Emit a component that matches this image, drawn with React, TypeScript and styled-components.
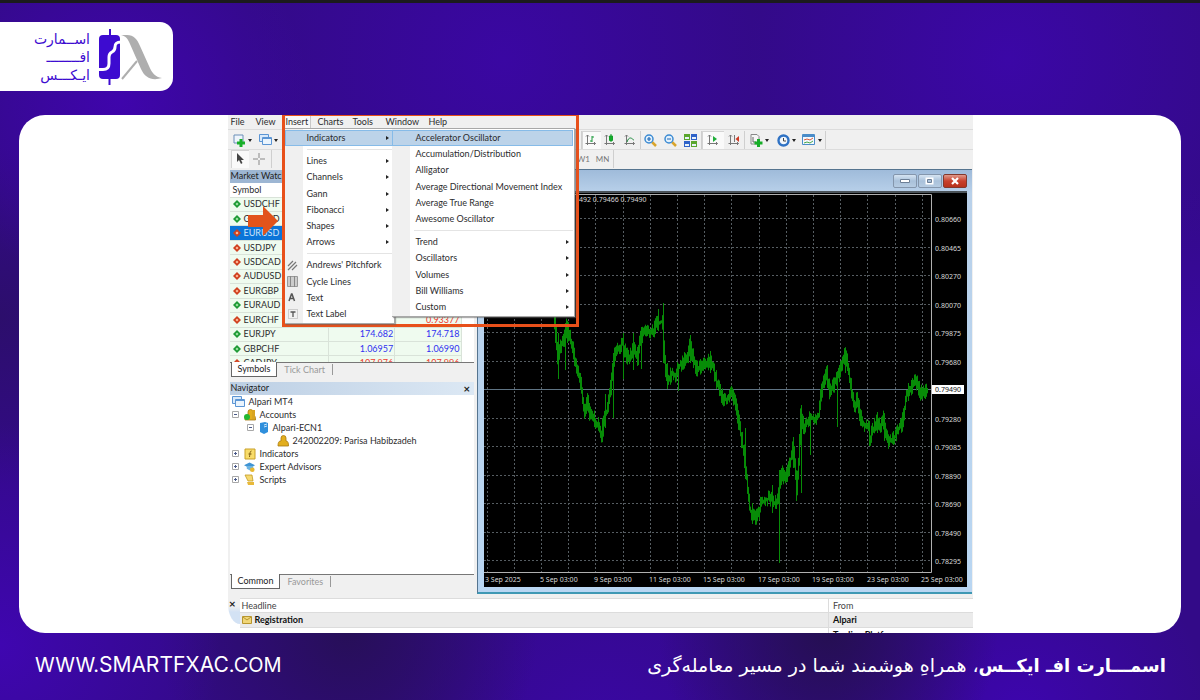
import React from "react";
import styled, { createGlobalStyle } from "styled-components";

const GlobalStyle = createGlobalStyle`
  *, *::before, *::after { box-sizing: border-box; }
  body { margin: 0; background: #310a86; }
  button { font: inherit; color: inherit; background: none; border: 0; margin: 0; padding: 0; text-align: left; white-space: nowrap; }
  a { color: inherit; text-decoration: none; }
  svg { display: block; flex: none; }
`;

const orange = "#e8501a";

/* ---------- page shell ---------- */

const Page = styled.div`
  display: flex;
  flex-direction: column;
  min-height: 100vh;
  border-top: 3px solid #1b1b1d;
  color: #fff;
  background:
    radial-gradient(circle at 0% 92%, #3f06b0 0, transparent 220px),
    radial-gradient(circle at 10% 14%, #3f05ac 0, transparent 190px),
    radial-gradient(circle at 29% 90%, #270f58 0, transparent 190px),
    radial-gradient(circle at 69% 90%, #250f52 0, transparent 170px),
    radial-gradient(circle at 85% 102%, #3d05ae 0, transparent 190px),
    radial-gradient(circle at 50% 106%, #3a07a4 0, transparent 220px),
    radial-gradient(circle at 84% 8%, #3b07a6 0, transparent 260px),
    radial-gradient(circle at 42% 8%, #3a07a2 0, transparent 260px),
    radial-gradient(circle at 0% 45%, #2c0e6c 0, transparent 170px),
    radial-gradient(circle at 100% 50%, #3908a0 0, transparent 170px),
    #330a88;
`;

const Header = styled.header`
  padding: 19px 0 24px;
`;

const LogoTab = styled.a`
  display: inline-flex;
  align-items: center;
  justify-content: flex-end;
  gap: 9px;
  width: 173px;
  height: 69px;
  padding-right: 10px;
  vertical-align: top;
  color: #3d0bd0;
  background: #fff;
  border-radius: 0 13px 13px 0;
`;

const LogoWords = styled.span`
  display: flex;
  flex-direction: column;
  font: 14px/18px "DejaVu Sans", sans-serif;
  text-align: right;
`;

const Card = styled.main`
  display: flex;
  flex: 1;
  justify-content: center;
  margin: 0 19px;
  overflow: hidden;
  background: #fff;
  border-radius: 26px;
`;

const Footer = styled.footer`
  display: flex;
  align-items: center;
  justify-content: space-between;
  gap: 24px;
  height: 68px;
  padding: 0 34px 4px 35px;
`;

const Site = styled.a`
  font: 400 21px/28px Inter, sans-serif;
  small { font-size: 20px; }
`;

const Slogan = styled.p`
  margin: 0;
  font: 19px/30px "DejaVu Sans", sans-serif;
  b { font-size: 18px; }
`;

/* ---------- terminal window ---------- */

const Terminal = styled.section`
  position: relative;
  display: flex;
  flex-direction: column;
  width: 100%;
  max-width: 745px;
  font: 9px/12px Lato, sans-serif;
  color: #2c2c2e;
  background: #f0f0f0;
`;

const MenuBar = styled.nav`
  display: flex;
  height: 14px;
  padding-left: 3px;
`;

const MenuTitle = styled.button<{ $w: number; $open?: boolean }>`
  width: ${(p) => p.$w}px;
  line-height: 14px;
  ${(p) => p.$open && "width: 25px; margin-right: 7px; background: #f8f8f8; border-right: 1px solid #c8c8c8;"}
`;

const Toolbar = styled.div<{ $h: number }>`
  display: flex;
  align-items: flex-end;
  height: ${(p) => p.$h}px;
  border-top: 1px solid #dcdcdc;
`;

const ToolSet = styled.div<{ $w: number }>`
  display: flex;
  align-items: center;
  width: ${(p) => p.$w}px;
  padding-left: 3px;
  border-right: 1px solid #cfcfcf;
`;

const ToolGap = styled.div<{ $w: number }>`
  width: ${(p) => p.$w}px;
`;

const Tool = styled.button<{ $w?: number; $on?: boolean; $end?: boolean }>`
  display: flex;
  align-items: center;
  justify-content: center;
  gap: 2px;
  width: ${(p) => p.$w ?? 19}px;
  height: 18px;
  font-size: 8px;
  color: #777;
  ${(p) => p.$on && "background: #fafafa; box-shadow: inset 1px 1px #d4d4d4;"}
  ${(p) => p.$end && "border-right: 1px solid #cfcfcf;"}
`;

const Caret = styled.i`
  border: 2px solid transparent;
  border-top: 3px solid #222;
  border-bottom: 0;
`;

const Workspace = styled.div`
  display: flex;
  flex: 1;
`;

const Side = styled.aside`
  display: flex;
  flex: none;
  flex-direction: column;
  width: 249px;
  padding: 2px 3px 0 2px;
`;

const PanelTitle = styled.h2<{ $light?: boolean }>`
  display: flex;
  justify-content: space-between;
  height: 13px;
  margin: 0;
  padding: 0 3px 0 1px;
  font: inherit;
  color: #222;
  background: ${(p) => (p.$light ? "linear-gradient(90deg, #bccfe4, #dce8f4)" : "#9db6d3")};
`;

const QuoteBox = styled.div`
  height: 179px;
  overflow: hidden;
  background: #fff;
`;

const Quotes = styled.table`
  width: 232px;
  height: 188px;
  border-collapse: collapse;
  table-layout: fixed;
  line-height: 10px;
  th, td { padding: 0 1px; border: 0 solid #d9e3d9; border-width: 0 1px 1px 0; font-weight: 400; text-align: right; }
  th { height: 14px; padding-left: 3px; }
  th:first-child, td:first-child { width: 99px; text-align: left; }
  tbody tr { background: #effbef; }
`;

const QuoteRow = styled.tr<{ $picked?: boolean; $color: string }>`
  && { ${(p) => p.$picked && "background: #0b74d8; color: #cfe4fa;"} }
  td:not(:first-child) { color: ${(p) => p.$color}; }
`;

const SymbolName = styled.span`
  display: flex;
  align-items: center;
  gap: 3px;
  padding-left: 2px;
`;

const Tabs = styled.div`
  display: flex;
  height: 20px;
  border-top: 1px solid #777;
`;

const Tab = styled.button<{ $on?: boolean }>`
  height: 15px;
  padding: 0 7px;
  color: #999;
  border-right: 1px solid #999;
  ${(p) =>
    p.$on
      ? "margin: -1px 0 0 1px; padding: 0 6px; color: #222; background: #fff; border: 1px solid #666; border-top: 0;"
      : "height: 11px; margin-top: 1px; line-height: 11px;"}
`;

const Close = styled.button`
  font: 700 9px/12px "DejaVu Sans", sans-serif;
  color: #222;
`;

const Tree = styled.ul`
  flex: 1;
  margin: 0;
  padding: 0 0 0 2px;
  list-style: none;
  background: #fff;
`;

const Leaf = styled.li<{ $depth: number }>`
  display: flex;
  align-items: center;
  gap: 4px;
  height: 13px;
  padding-left: ${(p) => p.$depth * 15}px;
`;

/* ---------- chart window ---------- */

const ChartWindow = styled.section`
  display: flex;
  flex: 1;
  flex-direction: column;
  min-width: 0;
  margin: 1px 1px 0 0;
  padding: 0 5px 5px 6px;
  background: linear-gradient(#9fbbda, #b9d1ea 23px, #b9d6f2);
  border: 1px solid #55748f;
  border-bottom: 2px solid #3f98b4;
  border-width: 1px 0 2px 1px;
`;

const ChartTitle = styled.div`
  display: flex;
  align-items: center;
  justify-content: flex-end;
  gap: 1px;
  height: 23px;
  border-bottom: 2px solid #4a5258;
`;

const Caption = styled.button<{ $close?: boolean }>`
  display: flex;
  align-items: center;
  justify-content: center;
  width: 24px;
  height: 14px;
  background: ${(p) => (p.$close ? "linear-gradient(#e09a8c, #c8402c 50%, #b8321c)" : "linear-gradient(#d6e4f2, #a9c1da 50%, #b6cce2)")};
  border: 1px solid ${(p) => (p.$close ? "#83382c" : "#8496ac")};
  border-radius: 2px;
`;

const Plot = styled.svg`
  width: 100%;
  flex: 1;
  background: #000;
  text { font: 7px "Noto Sans", sans-serif; fill: #d8d8d8; }
`;

/* ---------- news list ---------- */

const News = styled.div`
  display: flex;
  height: 39px;
  padding-top: 4px;
  background: #f0f0f0;
`;

const NewsGutter = styled.div`
  width: 12px;
  background: #fff;
`;

const NewsEdge = styled.div`
  height: 26px;
  background: linear-gradient(#f0f0f0 8px, #d3e2f4 14px);
  border-bottom-left-radius: 12px 20px;
  padding-left: 1px;
`;

const NewsTable = styled.table`
  flex: 1;
  height: 44px;
  border-collapse: collapse;
  table-layout: fixed;
  color: #444;
  background: #fff;
  th, td { height: 14px; padding: 0 2px; text-align: left; border-top: 1px solid #dcdcdc; }
  th { font-weight: 400; }
  td { color: #111; font-weight: 700; }
  th:last-child, td:last-child { width: 144px; padding-left: 4px; border-left: 1px solid #dcdcdc; }
  tbody tr:first-child { background: #ebebeb; }
`;

const NewsTitle = styled.span`
  display: flex;
  align-items: center;
  gap: 3px;
`;

/* ---------- open menus ---------- */

const Highlight = styled.div`
  position: absolute;
  top: 0;
  left: 54px;
  width: 297px;
  height: 212px;
  border: 3px solid ${orange};
  border-top-width: 1px;
`;

const Menu = styled.div<{ $x: number; $w: number; $h: number }>`
  position: absolute;
  top: 13px;
  left: ${(p) => p.$x}px;
  display: flex;
  flex-direction: column;
  width: ${(p) => p.$w}px;
  height: ${(p) => p.$h}px;
  padding: 1px 1px 1px 0;
  background: linear-gradient(90deg, #f0f0f0 18px, #fff 18px);
  border: 1px solid #a8a8a8;
  border-width: 1px 1px 1px 0;
  box-shadow: 1px 1px 1px #6668;
`;

const Entry = styled.button<{ $active?: boolean }>`
  display: flex;
  flex: 1;
  align-items: center;
  width: 100%;
  ${(p) => p.$active && "background: #bcd3e9; box-shadow: inset 0 0 0 1px #86bbe8;"}
  > span:first-child { flex: none; width: 22px; display: flex; padding-left: 2px; }
`;

const SubEntry = styled(Entry)`
  > span:first-child { width: 24px; }
`;

const Rule = styled.hr`
  width: calc(100% - 22px);
  height: 7px;
  margin: 0 0 0 22px;
  border: 0;
  background: linear-gradient(transparent 3px, #e4e4e4 3px, #e4e4e4 4px, transparent 4px);
`;

const More = styled.i`
  margin-right: 4px;
  margin-left: auto;
  border: 2px solid transparent;
  border-left: 3px solid #222;
  border-right: 0;
`;

const Pointer = styled.svg`
  position: absolute;
  top: 91px;
  left: 20px;
`;

/* ---------- drawings ---------- */

const LogoMark = () => (
  <svg width="64" height="58" viewBox="0 0 64 58">
    <path d="M11 1v7M10.500 49v8" stroke="#3d0bd0" strokeWidth="2" />
    <rect x="0" y="7" width="21" height="44" rx="4" fill="#3d0bd0" />
    <path d="M-1 41.500h5c4 0 6-2 6-6V29c0-3 1-4 3-5s3-2 3-5 1-5 6-5" fill="none" stroke="#fff" strokeWidth="3" />
    <path d="M22 7h6c7 0 10 4 13 11l9 20c3 7 6 11 13 12-10 3-17 0-21-9L31 16c-2-5-4-8-9-9z" fill="#aeaeae" />
    <path d="M38 33 23 51" stroke="#aeaeae" strokeWidth="2" />
  </svg>
);

const Bars = ({ kind }: { kind: "bars" | "candle" | "line" | "scroll" | "shift" }) => (
  <svg width="12" height="12" viewBox="0 0 12 12" fill="none">
    <path d="M2.500 1v10M0.500 9.500h10M1 2.500l1.500-1.500 1.500 1.500M9 8l1.500 1.500-1.500 1.500" stroke="#777" />
    {kind === "bars" && <path d="M7 2v6M5 7h2M7 3h2" stroke="#1c9a3c" />}
    {kind === "candle" && <path d="M7 0v8M5.500 2h3v4.500h-3z" stroke="#14a02c" fill="#14b82c" />}
    {kind === "line" && <path d="M3 8c1-3 2-4 3.500-4S9 6 10 6" stroke="#1c8a3c" />}
    {kind === "scroll" && <path d="M6 2v6l4-3z" fill="#1fae3a" />}
    {kind === "shift" && (
      <>
        <path d="M6.500 1v7" stroke="#777" />
        <path d="M11 2v6L7.500 5z" fill="#cf3a24" />
      </>
    )}
  </svg>
);

const Lens = ({ plus }: { plus?: boolean }) => (
  <svg width="13" height="13" viewBox="0 0 13 13" fill="none">
    <path d="M8 8l4 4" stroke="#d9a52c" strokeWidth="2.500" />
    <circle cx="5" cy="5" r="4" fill="#e2f1fd" stroke="#3b8ad2" strokeWidth="1.500" />
    <path d={plus ? "M3 5h4M5 3v4" : "M3 5h4"} stroke="#2069b4" strokeWidth="1.200" />
  </svg>
);

const Tiles = () => (
  <svg width="13" height="13" viewBox="0 0 13 13">
    <path d="M0 0h6v6H0zM7 7h6v6H7z" fill="#5aa62c" />
    <path d="M7 0h6v6H7zM0 7h6v6H0z" fill="#2f62c8" />
    <path d="M1 3h4v2H1zM8 3h4v2H8zM1 10h4v2H1zM8 10h4v2H8z" fill="#e8f2fa" />
  </svg>
);

const AddChart = () => (
  <svg width="13" height="13" viewBox="0 0 13 13">
    <path d="M1 1h9v8H1z" fill="#eef4fb" stroke="#6b8fb8" />
    <path d="M8 5v8M4 9h8" stroke="#17ae28" strokeWidth="3" />
  </svg>
);

const AddIndicator = () => (
  <svg width="13" height="13" viewBox="0 0 13 13">
    <path d="M1 .5h6l2 2V10H1z" fill="#f6f6f6" stroke="#888" />
    <path d="M3 3v5h3" fill="none" stroke="#666" />
    <path d="M8.500 5v8M4.500 9h8" stroke="#17ae28" strokeWidth="3" />
  </svg>
);

const Windows = () => (
  <svg width="13" height="12" viewBox="0 0 13 12">
    <path d="M.5.500h9v7h-9z" fill="#d8e9fa" stroke="#5b95d4" />
    <path d="M3.500 3.500h9v7h-9z" fill="#eaf4fd" stroke="#5b95d4" />
    <path d="M3.500 4.500h9" stroke="#5b95d4" />
  </svg>
);

const Clock = () => (
  <svg width="13" height="13" viewBox="0 0 13 13">
    <circle cx="6.500" cy="6.500" r="5" fill="#f2f7fc" stroke="#2f72c4" strokeWidth="2.400" />
    <path d="M6.500 4v3H9" fill="none" stroke="#444" />
  </svg>
);

const Template = () => (
  <svg width="14" height="12" viewBox="0 0 14 12">
    <path d="M.5.500h12v10H.5z" fill="#f2f8fd" stroke="#4a8cc8" />
    <path d="M.5 2h12" stroke="#4a8cc8" strokeWidth="2" />
    <path d="M2 6l3-1 3 1 3-2" fill="none" stroke="#d85a3a" />
    <path d="M2 9l3-1 3 1 3-2" fill="none" stroke="#49a84c" />
  </svg>
);

const Diamond = ({ up }: { up: boolean }) => (
  <svg width="8" height="8" viewBox="0 0 8 8">
    <path d="M4 0l4 4-4 4-4-4z" fill={up ? "#1d9a35" : "#d0401e"} />
    <path d="M4 2.500L5.500 4 4 5.500 2.500 4z" fill={up ? "#a5e8a8" : "#ffc0a0"} />
  </svg>
);

const Expander = ({ open }: { open: boolean }) => (
  <svg width="8" height="8" viewBox="0 0 8 8" fill="none">
    <path d="M.5.500h6v6h-6z" fill="#fff" stroke="#a8a8a8" />
    <path d={open ? "M2 3.500h3" : "M2 3.500h3M3.500 2v3"} stroke="#4a5a8a" />
  </svg>
);

const Person = ({ online }: { online?: boolean }) => (
  <svg width="12" height="12" viewBox="0 0 12 12">
    <path d="M1 11c0-4 1-5 3-5V3a2 2 0 0 1 5 0v3c2 0 2.500 2 2.500 5z" fill="#e2ae1e" stroke="#a87a10" strokeWidth=".8" />
    {online && <path d="M8 1h3v9H8z" fill="#d8a420" />}
    {online && <circle cx="3" cy="8" r="3" fill="#23b832" />}
  </svg>
);

const Server = () => (
  <svg width="10" height="12" viewBox="0 0 10 12">
    <path d="M1 1l5-1 3 1v9l-4 2-4-2z" fill="#2f8fdc" />
    <path d="M5 3l3-1M5 5l3-1" stroke="#c9e6fa" />
  </svg>
);

const FnIcon = () => (
  <svg width="12" height="12" viewBox="0 0 12 12">
    <path d="M1 1h10v10H1z" fill="#f8dc6a" stroke="#c8a028" />
    <path d="M7.500 3C6 3 6 5 5.500 9M4.500 6h3" fill="none" stroke="#7a5a10" />
  </svg>
);

const Hat = () => (
  <svg width="12" height="12" viewBox="0 0 13 12">
    <path d="M0 4l6-3 6 3-6 3z" fill="#3f94d4" />
    <path d="M3 5v3l4 2 3-2V5" fill="#6db4e2" />
    <circle cx="9" cy="9" r="2.500" fill="#e8b830" />
  </svg>
);

const Scroll = () => (
  <svg width="12" height="12" viewBox="0 0 12 12">
    <path d="M1 1h7l1 6H4z" fill="#f5d970" stroke="#c39a22" strokeWidth=".8" />
    <path d="M3 8h7v3H4z" fill="#e8b93a" />
  </svg>
);

const Envelope = () => (
  <svg width="10" height="8" viewBox="0 0 10 8">
    <path d="M.5.500h9v7h-9z" fill="#f0d678" stroke="#b8962e" />
    <path d="M1 1l4 3 4-3" fill="none" stroke="#b8962e" />
  </svg>
);

const menuIcons = {
  fork: (
    <svg width="11" height="11" viewBox="0 0 11 11" stroke="#777" strokeWidth="1.200">
      <path d="M1 6l5-5M1 10l8-8M5 10l5-5" />
    </svg>
  ),
  cycle: (
    <svg width="11" height="11" viewBox="0 0 11 11">
      <path d="M.5.500h10v10H.5z" fill="#ccc" stroke="#999" />
      <path d="M3.500 0v11M7.500 0v11" stroke="#888" />
    </svg>
  ),
  text: (
    <svg width="11" height="11" viewBox="0 0 11 11" fill="none" stroke="#555" strokeWidth="1.500">
      <path d="M2 9l2.500-7h.5L7.500 9M3 6.500h4" />
    </svg>
  ),
  label: (
    <svg width="11" height="11" viewBox="0 0 11 11" fill="none">
      <path d="M1.500 1.500h9v9h-9z" stroke="#aaa" strokeDasharray="1 1" />
      <path d="M3.500 4h5M6 4v5" stroke="#555" strokeWidth="1.300" />
    </svg>
  ),
};

/* ---------- data ---------- */

type Quote = { name: string; up: boolean; bid?: string; ask?: string; color?: string; picked?: boolean };

const quotes: Quote[] = [
  { name: "USDCHF", up: true },
  { name: "GBPUSD", up: true },
  { name: "EURUSD", up: false, picked: true },
  { name: "USDJPY", up: false },
  { name: "USDCAD", up: false },
  { name: "AUDUSD", up: false },
  { name: "EURGBP", up: false },
  { name: "EURAUD", up: true },
  { name: "EURCHF", up: false, ask: "0.93377", color: "#f03a2e" },
  { name: "EURJPY", up: true, bid: "174.682", ask: "174.718" },
  { name: "GBPCHF", up: true, bid: "1.06957", ask: "1.06990" },
  { name: "CADJPY", up: false, bid: "107.976", ask: "107.996", color: "#f03a2e" },
];

const priceLabels = ["0.80660", "0.80465", "0.80270", "0.80070", "0.79875", "0.79680", "", "0.79280", "0.79085", "0.78890", "0.78690", "0.78490", "0.78295"];
const dateLabels = ["3 Sep 2025", "5 Sep 03:00", "9 Sep 03:00", "11 Sep 03:00", "15 Sep 03:00", "17 Sep 03:00", "19 Sep 03:00", "23 Sep 03:00", "25 Sep 03:00"];

/* Price path in plot units: x, y pairs. */
const path = [
  70, 118, 72, 140, 74, 165, 77, 154, 81, 145, 83, 134, 87, 148, 91, 166, 94, 181, 97, 189, 99, 208, 101, 221, 104, 208, 106, 222,
  110, 225, 114, 233, 118, 242, 121, 225, 124, 215, 127, 195, 129, 172, 132, 155, 135, 156, 139, 150, 142, 163, 146, 165, 150, 156,
  154, 165, 157, 144, 161, 138, 165, 140, 170, 137, 174, 130, 178, 129, 179, 128, 180, 150, 182, 180, 184, 188, 188, 180, 192, 184,
  196, 172, 200, 169, 204, 164, 206, 152, 209, 164, 213, 177, 219, 173, 223, 172, 227, 166, 230, 177, 233, 190, 235, 195, 239, 207,
  243, 206, 248, 201, 252, 213, 256, 235, 260, 260, 262, 276, 264, 296, 266, 315, 268, 322, 272, 324, 275, 321, 277, 310, 282, 307,
  286, 305, 290, 310, 294, 308, 296, 290, 298, 280, 302, 287, 306, 272, 309, 254, 311, 268, 313, 296, 315, 270, 317, 222, 320, 236,
  323, 230, 327, 225, 331, 226, 335, 222, 337, 202, 340, 189, 343, 182, 346, 199, 350, 192, 354, 184, 357, 176, 361, 163, 363, 166,
  366, 186, 369, 205, 371, 216, 373, 204, 377, 226, 381, 232, 385, 235, 386, 246, 390, 236, 394, 227, 396, 236, 400, 226, 403, 244,
  405, 248, 410, 247, 414, 236, 418, 233, 421, 216, 423, 199, 427, 196, 431, 187, 434, 192, 437, 200, 440, 201, 444, 196,
];

/* Single bars that reach well beyond the path: x, top, bottom. */
const spikes = [
  [71, 110, 150], [74, 140, 186], [81, 130, 177], [83, 128, 150], [118, 225, 245], [121, 201, 235], [129, 160, 225], [139, 140, 186],
  [149, 140, 177], [157, 134, 176], [174, 116, 138], [179, 110, 170], [183, 170, 196], [194, 180, 198], [206, 142, 170], [226, 162, 180],
  [261, 235, 286], [268, 310, 331], [288, 292, 320], [295, 277, 370], [309, 244, 275], [312, 280, 308], [317, 212, 300], [326, 220, 262],
  [343, 172, 195], [353, 182, 234], [361, 161, 180], [385, 228, 253], [393, 219, 240], [400, 221, 248], [424, 190, 208],
];

function buildBars() {
  let d = "";
  let seed = 7;
  const rnd = () => {
    seed = (seed * 16807) % 2147483647;
    return seed / 2147483647;
  };
  for (let i = 0; i < path.length - 2; i += 2) {
    const [x0, y0, x1, y1] = path.slice(i, i + 4);
    for (let x = x0; x < x1; x += 1) {
      const a = y0 + ((y1 - y0) * (x - x0)) / (x1 - x0);
      const b = y0 + ((y1 - y0) * (x + 1 - x0)) / (x1 - x0);
      const top = Math.min(a, b) - 1 - rnd() * 8;
      const bottom = Math.max(a, b) + 1 + rnd() * 7;
      d += `M${x + 0.5} ${top.toFixed(1)}V${bottom.toFixed(1)}`;
    }
  }
  spikes.forEach(([x, t, b]) => {
    d += `M${x + 0.5} ${t}V${b}`;
  });
  return d;
}

const bars = buildBars();

const Chart = () => (
  <Plot viewBox="0 0 483 394" preserveAspectRatio="xMidYMin meet">
    <g stroke="#565d62" strokeDasharray="2 2">
      {priceLabels.map((_, i) => {
        const y = Math.round(26 + i * 28.5) - 0.5;
        return <path key={i} d={`M0 ${y}H446`} />;
      })}
      {Array.from({ length: 17 }, (_, i) => {
        const x = Math.round(2.600 + i * 27.2) + 0.5;
        return <path key={i} d={`M${x} 2V379`} />;
      })}
    </g>
    <path d="M0 196.500H447" stroke="#5f7484" />
    <path d={bars} stroke="#078c07" />
    <path d="M0 1.500H447.500V379.500H0" fill="none" stroke="#b0b0b0" />
    {priceLabels.map((p, i) => (
      <text key={i} x="451" y={Math.round(29 + i * 28.5)}>{p}</text>
    ))}
    <rect x="448" y="192" width="32" height="9" fill="#fff" />
    <text x="451" y="199" style={{ fill: "#111" }}>0.79490</text>
    {dateLabels.map((d, i) => (
      <text key={d} x={Math.round(1 + i * 54.5)} y="389">{d}</text>
    ))}
    <text x="95" y="9">492 0.79466 0.79490</text>
  </Plot>
);

const insertMenu: (null | { label: string; more?: boolean; icon?: keyof typeof menuIcons; active?: boolean })[] = [
  { label: "Indicators", more: true, active: true },
  null,
  { label: "Lines", more: true },
  { label: "Channels", more: true },
  { label: "Gann", more: true },
  { label: "Fibonacci", more: true },
  { label: "Shapes", more: true },
  { label: "Arrows", more: true },
  null,
  { label: "Andrews' Pitchfork", icon: "fork" },
  { label: "Cycle Lines", icon: "cycle" },
  { label: "Text", icon: "text" },
  { label: "Text Label", icon: "label" },
];

const indicatorMenu: (null | { label: string; more?: boolean })[] = [
  { label: "Accelerator Oscillator" },
  { label: "Accumulation/Distribution" },
  { label: "Alligator" },
  { label: "Average Directional Movement Index" },
  { label: "Average True Range" },
  { label: "Awesome Oscillator" },
  null,
  { label: "Trend", more: true },
  { label: "Oscillators", more: true },
  { label: "Volumes", more: true },
  { label: "Bill Williams", more: true },
  { label: "Custom", more: true },
];

export default function App() {
  return (
    <Page>
      <GlobalStyle />
      <Header>
        <LogoTab href="#" dir="ltr">
          <LogoWords dir="rtl" lang="fa">
            <span>اســمارت</span>
            <span>افــــــــ</span>
            <span>ایـکـــس</span>
          </LogoWords>
          <LogoMark />
        </LogoTab>
      </Header>

      <Card>
        <Terminal>
          <MenuBar>
            <MenuTitle $w={25}>File</MenuTitle>
            <MenuTitle $w={30}>View</MenuTitle>
            <MenuTitle $w={25} $open>Insert</MenuTitle>
            <MenuTitle $w={35}>Charts</MenuTitle>
            <MenuTitle $w={33}>Tools</MenuTitle>
            <MenuTitle $w={43}>Window</MenuTitle>
            <MenuTitle $w={30}>Help</MenuTitle>
          </MenuBar>

          <Toolbar $h={20}>
            <ToolSet $w={354}>
              <Tool $w={24} aria-label="New chart"><AddChart /><Caret /></Tool>
              <Tool $w={28} aria-label="Profiles"><Windows /><Caret /></Tool>
            </ToolSet>
            <Tool $on aria-label="Bar chart"><Bars kind="bars" /></Tool>
            <Tool aria-label="Candlesticks"><Bars kind="candle" /></Tool>
            <Tool $w={21} $end aria-label="Line chart"><Bars kind="line" /></Tool>
            <Tool $w={20} aria-label="Zoom in"><Lens plus /></Tool>
            <Tool aria-label="Zoom out"><Lens /></Tool>
            <Tool $w={22} $end aria-label="Tile windows"><Tiles /></Tool>
            <Tool $w={22} $on aria-label="Auto scroll"><Bars kind="scroll" /></Tool>
            <Tool $w={21} $end aria-label="Chart shift"><Bars kind="shift" /></Tool>
            <Tool $w={29} aria-label="Indicators"><AddIndicator /><Caret /></Tool>
            <Tool $w={25} aria-label="Periods"><Clock /><Caret /></Tool>
            <Tool $w={27} $end aria-label="Templates"><Template /><Caret /></Tool>
          </Toolbar>

          <Toolbar $h={19}>
            <ToolSet $w={44}>
              <Tool $w={18} $on aria-label="Cursor">
                <svg width="8" height="12" viewBox="0 0 8 12"><path d="M1 0v9l2-2 2 4 1.500-1L5 7h3z" fill="#444" /></svg>
              </Tool>
              <Tool $w={20} aria-label="Crosshair">
                <svg width="12" height="12" viewBox="0 0 12 12"><path d="M6 0v5M6 7v5M0 6h5M7 6h5" stroke="#888" /></svg>
              </Tool>
            </ToolSet>
            <ToolGap $w={303} />
            <Tool $w={18}>W1</Tool>
            <Tool $w={21} $end>MN</Tool>
          </Toolbar>

          <Workspace>
            <Side>
              <PanelTitle>Market Watch</PanelTitle>
              <QuoteBox>
                <Quotes>
                  <thead>
                    <tr><th>Symbol</th><th /><th /></tr>
                  </thead>
                  <tbody>
                    {quotes.map((q) => (
                      <QuoteRow key={q.name} $picked={q.picked} $color={q.color ?? "#3030f0"}>
                        <td><SymbolName><Diamond up={q.up} />{q.name}</SymbolName></td>
                        <td>{q.bid}</td>
                        <td>{q.ask}</td>
                      </QuoteRow>
                    ))}
                  </tbody>
                </Quotes>
              </QuoteBox>
              <Tabs>
                <Tab $on>Symbols</Tab>
                <Tab>Tick Chart</Tab>
              </Tabs>
              <PanelTitle $light>Navigator <Close aria-label="Close navigator">×</Close></PanelTitle>
              <Tree>
                <Leaf $depth={0}><Windows />Alpari MT4</Leaf>
                <Leaf $depth={0}><Expander open /><Person online />Accounts</Leaf>
                <Leaf $depth={1}><Expander open /><Server />Alpari-ECN1</Leaf>
                <Leaf $depth={3}><Person />242002209: Parisa Habibzadeh</Leaf>
                <Leaf $depth={0}><Expander open={false} /><FnIcon />Indicators</Leaf>
                <Leaf $depth={0}><Expander open={false} /><Hat />Expert Advisors</Leaf>
                <Leaf $depth={0}><Expander open={false} /><Scroll />Scripts</Leaf>
              </Tree>
              <Tabs>
                <Tab $on>Common</Tab>
                <Tab>Favorites</Tab>
              </Tabs>
            </Side>

            <ChartWindow>
              <ChartTitle>
                <Caption aria-label="Minimize"><svg width="10" height="4"><path d="M.5.500h9v3h-9z" fill="#fff" stroke="#6c7f96" /></svg></Caption>
                <Caption aria-label="Maximize"><svg width="9" height="8"><path d="M1.500 1.500h6v5h-6z" fill="none" stroke="#fff" strokeWidth="2" /><path d="M2.500 2.500h4v3h-4z" fill="none" stroke="#6c7f96" /></svg></Caption>
                <Caption $close aria-label="Close"><svg width="10" height="8"><path d="M2 1l6 6M8 1L2 7" stroke="#fff" strokeWidth="2.200" /></svg></Caption>
              </ChartTitle>
              <Chart />
            </ChartWindow>
          </Workspace>

          <News>
            <NewsGutter><NewsEdge><Close aria-label="Close news">×</Close></NewsEdge></NewsGutter>
            <NewsTable>
              <thead>
                <tr><th>Headline</th><th>From</th></tr>
              </thead>
              <tbody>
                <tr><td><NewsTitle><Envelope />Registration</NewsTitle></td><td>Alpari</td></tr>
                <tr><td /><td>Trading Platform</td></tr>
              </tbody>
            </NewsTable>
          </News>

          <Highlight />
          <Menu $x={57} $w={110} $h={196}>
            {insertMenu.map((m, i) =>
              m ? (
                <Entry key={i} $active={m.active}>
                  <span>{m.icon && menuIcons[m.icon]}</span>
                  {m.label}
                  {m.more && <More />}
                </Entry>
              ) : (
                <Rule key={i} />
              )
            )}
          </Menu>
          <Menu $x={164} $w={183} $h={189}>
            {indicatorMenu.map((m, i) =>
              m ? (
                <SubEntry key={i} $active={i === 0}>
                  <span />
                  {m.label}
                  {m.more && <More />}
                </SubEntry>
              ) : (
                <Rule key={i} />
              )
            )}
          </Menu>
          <Pointer width="31" height="30" viewBox="0 0 31 30">
            <path d="M0 9h15V0l15 15-15 15v-9H0z" fill="#e2541b" />
          </Pointer>
        </Terminal>
      </Card>

      <Footer>
        <Site href="#"><small>WWW.</small>SMARTFXAC<small>.COM</small></Site>
        <Slogan dir="rtl" lang="fa">
          <b>اسمـــارت افـ ایکــس</b>، همراهِ هوشمند شما در مسیر معامله‌گری
        </Slogan>
      </Footer>
    </Page>
  );
}
